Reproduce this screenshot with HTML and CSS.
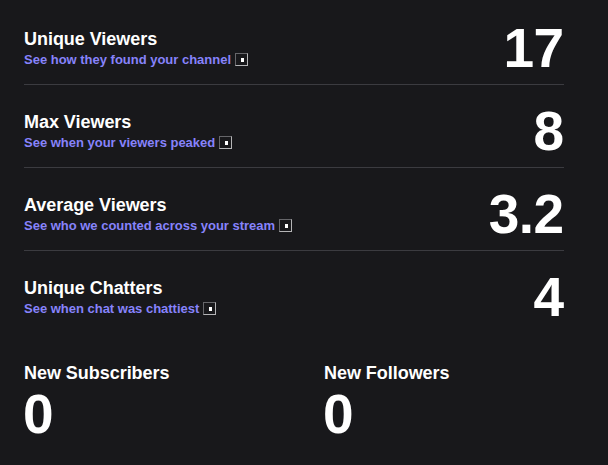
FILE: index.html
```html
<!DOCTYPE html>
<html lang="en">
<head>
<meta charset="utf-8">
<title>Stream Summary</title>
<link rel="stylesheet" href="styles.css">
</head>
<body>
<main class="summary">
  <section class="stat">
    <div><h2 class="title">Unique Viewers</h2><a class="link">See how they found your channel<span class="glyph"></span></a></div>
    <strong class="value">17</strong>
  </section>
  <section class="stat">
    <div><h2 class="title">Max Viewers</h2><a class="link">See when your viewers peaked<span class="glyph"></span></a></div>
    <strong class="value">8</strong>
  </section>
  <section class="stat">
    <div><h2 class="title">Average Viewers</h2><a class="link">See who we counted across your stream<span class="glyph"></span></a></div>
    <strong class="value">3.2</strong>
  </section>
  <section class="stat">
    <div><h2 class="title">Unique Chatters</h2><a class="link">See when chat was chattiest<span class="glyph"></span></a></div>
    <strong class="value">4</strong>
  </section>
  <div class="totals">
    <section><h2 class="title">New Subscribers</h2><strong class="value">0</strong></section>
    <section><h2 class="title">New Followers</h2><strong class="value">0</strong></section>
  </div>
</main>
</body>
</html>
```

FILE: styles.css
```css
* { box-sizing: border-box; }
body {
  margin: 0;
  background: #18181b;
  color: #fff;
  font-family: "Liberation Sans", Arial, sans-serif;
  overflow: hidden;
}
.summary { width: 540px; margin-left: 24px; padding-top: 2px; }
.stat {
  display: flex;
  justify-content: space-between;
  height: 83px;
  padding-top: 26px;
  border-bottom: 1px solid #3b3b40;
}
.stat:nth-child(4) { border-bottom: 0; }
.title { margin: 0; font-size: 18px; line-height: 22px; font-weight: 700; letter-spacing: -0.04px; }
.link {
  display: flex;
  align-items: center;
  gap: 3.5px;
  font-size: 13px;
  line-height: 19px;
  font-weight: 700;
  letter-spacing: -0.01px;
  color: #8783fb;
}
.glyph {
  width: 13px;
  height: 13px;
  padding: 4px 0 0 5px;
  border: 1px solid;
  border-color: #66666a #b4b4b6 #b4b4b6 #66666a;
}
.glyph::before { content: ""; display: block; width: 3px; height: 4px; background: #fff; }
.value { display: block; margin-left: -1px; font-size: 55px; line-height: 60px; font-weight: 700; letter-spacing: -0.6px; }
.stat .value { margin-top: -10px; padding-right: 0.5px; }
.totals { display: grid; grid-template-columns: 300px 240px; padding-top: 28px; }
```
